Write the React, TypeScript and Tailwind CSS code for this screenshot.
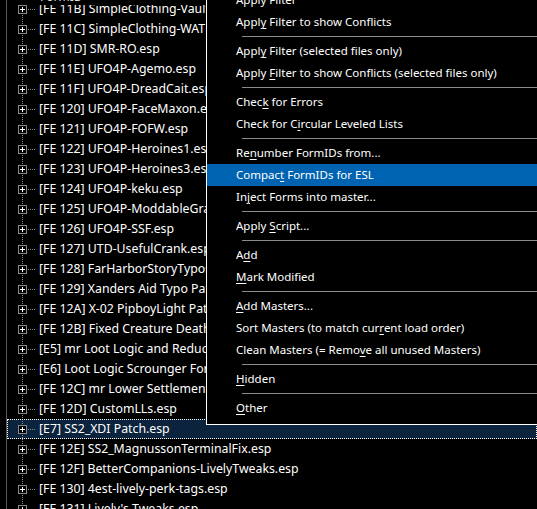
import React from 'react'

type Row = { id: string; name: string; selected?: boolean }

const rows: Row[] = [
  { id: 'FE 11B', name: 'SimpleClothing-VaultRaider.esp' },
  { id: 'FE 11C', name: 'SimpleClothing-WATMarine.esp' },
  { id: 'FE 11D', name: 'SMR-RO.esp' },
  { id: 'FE 11E', name: 'UFO4P-Agemo.esp' },
  { id: 'FE 11F', name: 'UFO4P-DreadCait.esp' },
  { id: 'FE 120', name: 'UFO4P-FaceMaxon.esp' },
  { id: 'FE 121', name: 'UFO4P-FOFW.esp' },
  { id: 'FE 122', name: 'UFO4P-Heroines1.esp' },
  { id: 'FE 123', name: 'UFO4P-Heroines3.esp' },
  { id: 'FE 124', name: 'UFO4P-keku.esp' },
  { id: 'FE 125', name: 'UFO4P-ModdableGraygarden.esp' },
  { id: 'FE 126', name: 'UFO4P-SSF.esp' },
  { id: 'FE 127', name: 'UTD-UsefulCrank.esp' },
  { id: 'FE 128', name: 'FarHarborStoryTypos.esp' },
  { id: 'FE 129', name: 'Xanders Aid Typo Patch.esp' },
  { id: 'FE 12A', name: 'X-02 PipboyLight Patch.esp' },
  { id: 'FE 12B', name: 'Fixed Creature Death Drops.esp' },
  { id: 'E5', name: 'mr Loot Logic and Reduction.esp' },
  { id: 'E6', name: 'Loot Logic Scrounger Fortune.esp' },
  { id: 'FE 12C', name: 'mr Lower Settlement Prices.esp' },
  { id: 'FE 12D', name: 'CustomLLs.esp' },
  { id: 'E7', name: 'SS2_XDI Patch.esp', selected: true },
  { id: 'FE 12E', name: 'SS2_MagnussonTerminalFix.esp' },
  { id: 'FE 12F', name: 'BetterCompanions-LivelyTweaks.esp' },
  { id: 'FE 130', name: '4est-lively-perk-tags.esp' },
  { id: 'FE 131', name: "Lively's Tweaks.esp" },
]

// label with the mnemonic letter index underlined, -1 = none
type Item = { label: string; u: number; active?: boolean } | 'sep'

const items: Item[] = [
  { label: 'Apply Filter', u: -1 },
  { label: 'Apply Filter to show Conflicts', u: 4 },
  'sep',
  { label: 'Apply Filter (selected files only)', u: 4 },
  { label: 'Apply Filter to show Conflicts (selected files only)', u: 6 },
  'sep',
  { label: 'Check for Errors', u: 4 },
  { label: 'Check for Circular Leveled Lists', u: 11 },
  'sep',
  { label: 'Renumber FormIDs from...', u: 2 },
  { label: 'Compact FormIDs for ESL', u: 6, active: true },
  { label: 'Inject Forms into master...', u: 2 },
  'sep',
  { label: 'Apply Script...', u: 6 },
  'sep',
  { label: 'Add', u: 1 },
  { label: 'Mark Modified', u: 0 },
  'sep',
  { label: 'Add Masters...', u: 0 },
  { label: 'Sort Masters (to match current load order)', u: 26 },
  { label: 'Clean Masters (= Remove all unused Masters)', u: 21 },
  'sep',
  { label: 'Hidden', u: 0 },
  'sep',
  { label: 'Other', u: 0 },
]

const font = { fontFamily: '"Noto Sans", "Open Sans", sans-serif' }

const Mnemonic: React.FC<{ label: string; u: number }> = ({ label, u }) => {
  if (u < 0) return <>{label}</>
  return (
    <>
      {label.slice(0, u)}
      <span className="underline decoration-1 underline-offset-[2px]">{label[u]}</span>
      {label.slice(u + 1)}
    </>
  )
}

const TreeRow: React.FC<{ row: Row }> = ({ row }) => (
  <div
    className={`flex h-[20px] items-stretch pl-[11px] ${
      row.selected ? 'bg-[#0b233d] outline-1 outline-dotted outline-white -outline-offset-1' : ''
    }`}
  >
    {/* expander with the dotted tree line */}
    <div className="flex w-[9px] flex-shrink-0 items-center bg-[repeating-linear-gradient(to_bottom,#8a8a8a_0_1px,transparent_1px_2px)] bg-[length:1px_100%] bg-[position:4px_0] bg-no-repeat">
      <div className="relative h-[9px] w-[9px] border border-[#8a8a8a] bg-black">
        <div className="absolute left-[1px] top-[3px] h-[1px] w-[5px] bg-white" />
        <div className="absolute left-[3px] top-[1px] h-[5px] w-[1px] bg-white" />
      </div>
    </div>
    <div className="ml-[1px] w-[7px] flex-shrink-0 self-center border-t border-dotted border-[#8a8a8a]" />
    <div className="ml-[4px] whitespace-nowrap text-[12.3px] leading-[20px] text-white">
      [{row.id}] {row.name}
    </div>
  </div>
)

export default function App() {
  return (
    <div className="relative h-[509px] w-[537px] overflow-hidden bg-black" style={font}>
      {/* tree view */}
      <div className="ml-[6px] h-full border-l border-[#5a5a5a]">
        <div className="relative z-10 h-[5px] overflow-hidden bg-black">
          <div className="-mt-[11px] pl-[33px] text-[12px] leading-[16px] text-[#d8d8d8]">FormID</div>
        </div>
        <div className="-mt-[6px]">
          {rows.map((r) => (
            <TreeRow key={r.id} row={r} />
          ))}
        </div>
      </div>

      {/* context menu */}
      <div className="absolute left-[206px] right-[-20px] top-[-15px] z-20 border-b border-l border-white bg-black pb-[5px] pt-[4px]">
        {items.map((it, i) =>
          it === 'sep' ? (
            <div key={i} className="h-[7px] pt-[3px] pl-[35px]">
              <div className="h-[1px] bg-[#8a8a8a]" />
            </div>
          ) : (
            <div
              key={i}
              className={`h-[22px] whitespace-nowrap pl-[29px] text-[11.5px] leading-[22px] text-white ${
                it.active ? 'bg-[#0063b1]' : ''
              }`}
            >
              <Mnemonic label={it.label} u={it.u} />
            </div>
          )
        )}
      </div>
    </div>
  )
}
